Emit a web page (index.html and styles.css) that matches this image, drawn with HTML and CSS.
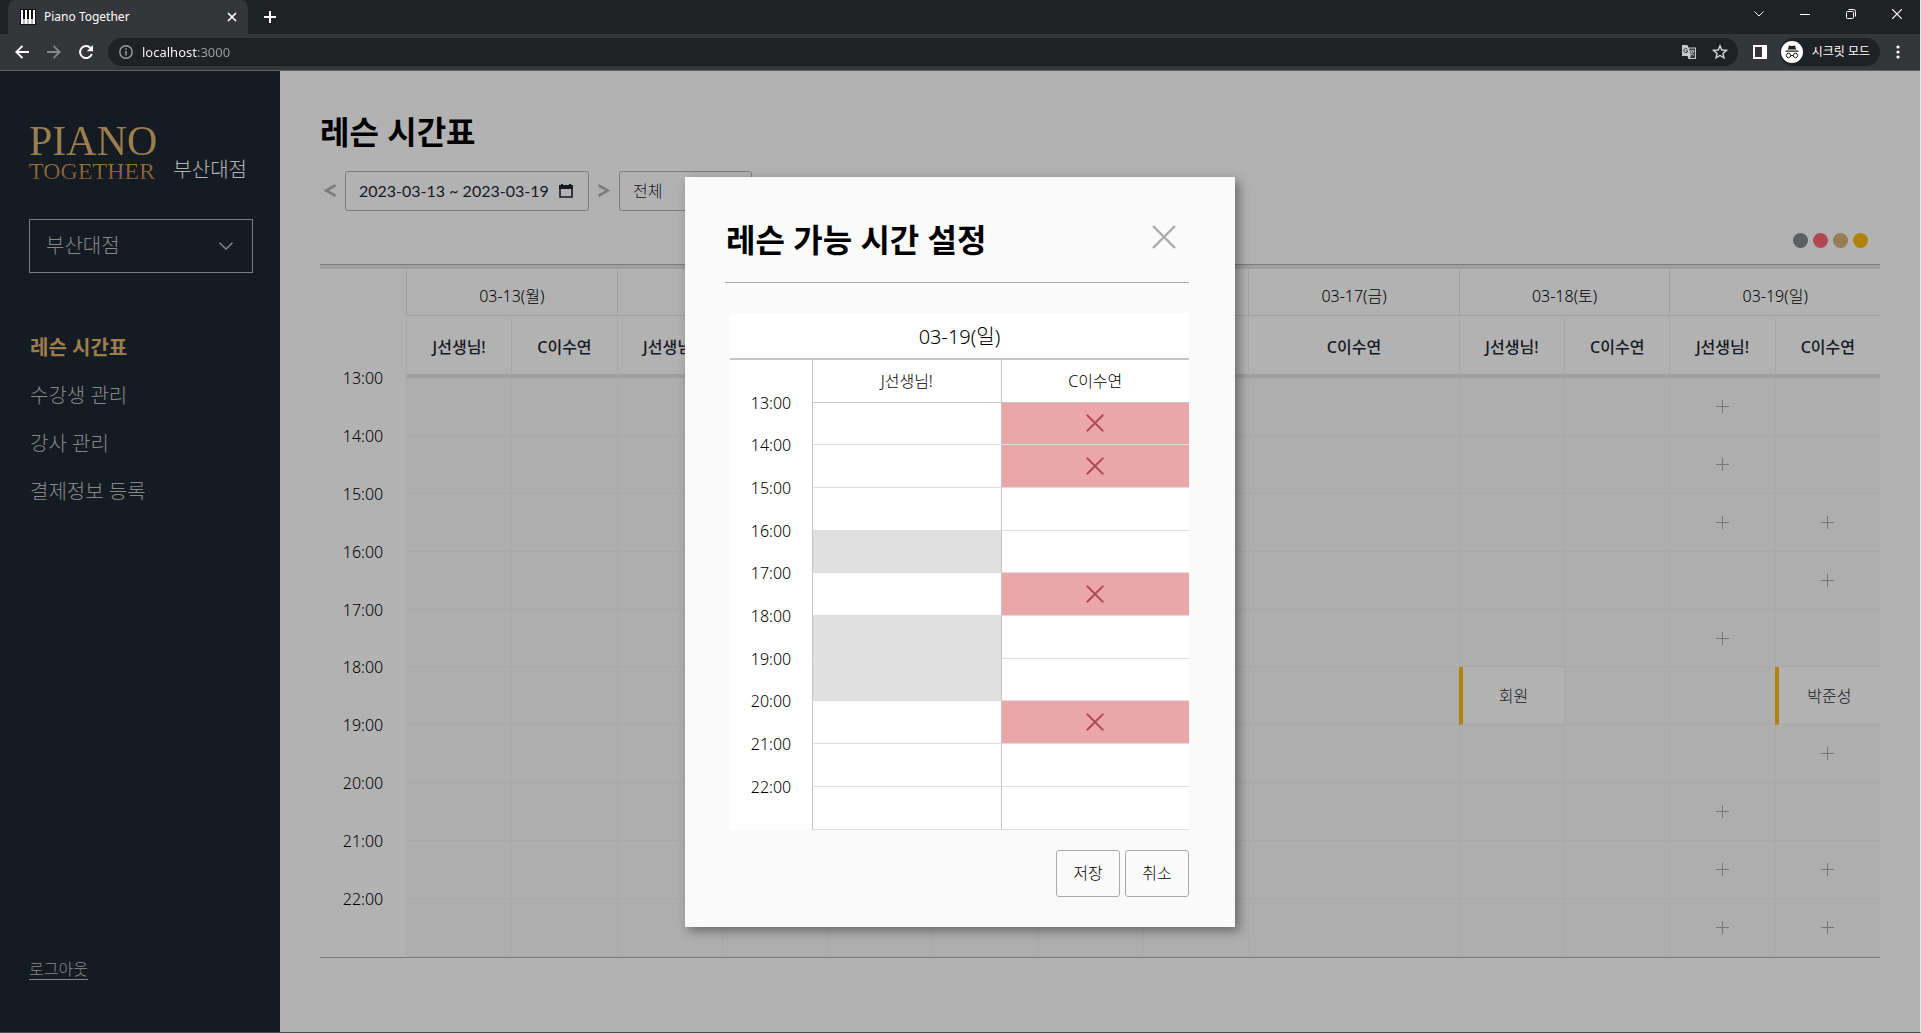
FILE: index.html
```html
<!DOCTYPE html>
<html lang="ko">
<head>
<meta charset="utf-8">
<meta name="viewport" content="width=device-width, initial-scale=1">
<title>Piano Together</title>
<link rel="stylesheet" href="styles.css">
</head>
<body>
<svg class="sprite" aria-hidden="true">
  <symbol id="plus" viewBox="0 0 13 13"><path d="M6.500 0V13M0 6.500H13" stroke="currentColor" fill="none"/></symbol>
  <symbol id="cross" viewBox="0 0 24 24"><path d="M1 1 23 23M23 1 1 23" stroke="currentColor" stroke-width="2.400" fill="none"/></symbol>
  <symbol id="chevron" viewBox="0 0 14 8"><path d="M.5.7 7 7 13.500.7" stroke="currentColor" stroke-width="1.500" fill="none"/></symbol>
</svg>

<header class="browser">
  <div class="tabstrip">
    <div class="tab">
      <svg class="favicon" viewBox="0 0 16 16"><path fill="#111" d="M0 0h16v16H0z"/><path fill="#fff" d="M1 1h14v14H1z"/><path fill="#111" d="M3 1h2v9H3zM7 1h2v9H7zM11 1h2v9h-2z"/><path stroke="#777" d="M4 10v5M8 10v5M12 10v5"/></svg>
      <span class="tab-title">Piano Together</span>
      <button class="icon-button" aria-label="탭 닫기"><svg width="10" height="10" viewBox="0 0 10 10"><path d="M1 1l8 8M9 1 1 9" stroke="#fff" stroke-width="1.700"/></svg></button>
    </div>
    <button class="icon-button new-tab" aria-label="새 탭"><svg width="12" height="12" viewBox="0 0 12 12"><path d="M6 0v12M0 6h12" stroke="#fff" stroke-width="2"/></svg></button>
    <div class="window-buttons">
      <button class="icon-button" aria-label="탭 검색"><svg width="10" height="6" viewBox="0 0 10 6"><path d="M.5.5 5 5 9.500.5" stroke="#fff" fill="none"/></svg></button>
      <button class="icon-button" aria-label="최소화"><svg width="10" height="2" viewBox="0 0 10 2"><path d="M0 1.500h10" stroke="#fff"/></svg></button>
      <button class="icon-button" aria-label="창 복원"><svg width="10" height="10" viewBox="0 0 10 10"><rect x=".5" y="2.500" width="7" height="7" rx="1" stroke="#fff" fill="none"/><path d="M2.500.5h5a2 2 0 0 1 2 2v5" stroke="#fff" fill="none"/></svg></button>
      <button class="icon-button" aria-label="닫기"><svg width="10" height="10" viewBox="0 0 10 10"><path d="M0 0l10 10M10 0 0 10" stroke="#fff" stroke-width="1.200"/></svg></button>
    </div>
  </div>
  <div class="toolbar">
    <div class="history">
      <button class="icon-button" aria-label="뒤로"><svg width="14" height="14" viewBox="0 0 14 14"><path d="M14 7H1.500M7.500.8 1.300 7l6.200 6.200" stroke="#fff" stroke-width="1.800" fill="none"/></svg></button>
      <button class="icon-button" aria-label="앞으로"><svg width="14" height="14" viewBox="0 0 14 14"><path d="M0 7h12.500M6.500.8 12.700 7l-6.200 6.200" stroke="#86888a" stroke-width="1.800" fill="none"/></svg></button>
      <button class="icon-button" aria-label="새로고침"><svg width="14" height="14" viewBox="0 0 14 14"><path d="M12.800 9A6 6 0 1 1 11.500 3" stroke="#fff" stroke-width="2" fill="none"/><path d="M14 0v6.200H7.800z" fill="#fff"/></svg></button>
    </div>
    <div class="omnibox">
      <svg width="14" height="14" viewBox="0 0 14 14"><circle cx="7" cy="7" r="6.200" stroke="#9aa0a6" stroke-width="1.400" fill="none"/><path d="M7 6v4.500M7 3.300v1.500" stroke="#9aa0a6" stroke-width="1.500"/></svg>
      <input class="address" type="text" aria-label="주소창" value="localhost:3000">
      <button class="icon-button" aria-label="번역"><svg width="14" height="14" viewBox="0 0 14 14"><path d="M0 0h5.500l1 2.500H14V14H6.500l-1-3H0z" fill="#c6c8ca"/><path d="M7.300 3.500H13V13H7.800L9 11z" fill="#35363a"/><path d="M8 6h4.500M10.200 4.800V6M11.700 6c-.3 2-2 3.500-3 4M9.200 7c.6 1.800 2 3 3 3.500" stroke="#c6c8ca" fill="none"/><path d="M5.300 4.300a2 2 0 1 0 .4 1.600H3.800" stroke="#35363a" fill="none"/></svg></button>
      <button class="icon-button" aria-label="북마크"><svg width="16" height="16" viewBox="0 0 16 16"><path d="M8 1.800l1.800 4.200 4.600.4-3.500 3 1.100 4.500L8 11.500l-4 2.400 1.100-4.500-3.500-3 4.600-.4z" stroke="#d5d6d8" stroke-width="1.400" fill="none"/></svg></button>
    </div>
    <button class="icon-button" aria-label="측면 패널"><svg width="14" height="14" viewBox="0 0 14 14"><path d="M1 1h12v12H1z" stroke="#fff" stroke-width="2" fill="none"/><path d="M9 1h4v12H9z" fill="#fff"/></svg></button>
    <button class="incognito">
      <svg width="22" height="22" viewBox="0 0 22 22"><circle cx="11" cy="11" r="11" fill="#fff"/><path d="M8 4.500l3 .6 3-.6 1.200 4H6.800zM4.500 9.500h13v1.200h-13z" fill="#202124"/><g stroke="#202124" fill="none"><circle cx="7.500" cy="14.500" r="2.200"/><circle cx="14.500" cy="14.500" r="2.200"/><path d="M9.700 14.500h2.600"/></g></svg>
      시크릿 모드
    </button>
    <button class="icon-button menu-button" aria-label="메뉴"><svg width="4" height="14" viewBox="0 0 4 14"><g fill="#fff"><circle cx="2" cy="2" r="1.600"/><circle cx="2" cy="7" r="1.600"/><circle cx="2" cy="12" r="1.600"/></g></svg></button>
  </div>
</header>

<div class="app">
  <aside class="sidebar">
    <div class="brand">
      <div class="logo"><span class="logo-top">PIANO</span><span class="logo-bottom">TOGETHER</span></div>
      <span class="branch">부산대점</span>
    </div>
    <label class="picker branch-picker">
      <select aria-label="지점 선택"><option>부산대점</option></select>
      <svg width="14" height="8"><use href="#chevron"/></svg>
    </label>
    <nav class="menu">
      <a class="active" href="#lessons">레슨 시간표</a>
      <a href="#students">수강생 관리</a>
      <a href="#teachers">강사 관리</a>
      <a href="#payments">결제정보 등록</a>
    </nav>
    <a class="logout" href="#logout">로그아웃</a>
  </aside>

  <main class="content">
    <h1>레슨 시간표</h1>
    <div class="filters">
      <button class="week-step" aria-label="이전 주"><svg width="12" height="13" viewBox="0 0 12 13"><path d="M11.500 1.200 2 6.500l9.500 5.300" stroke="currentColor" stroke-width="2.600" fill="none"/></svg></button>
      <label class="week-field">
        <input type="text" aria-label="기간" value="2023-03-13 ~ 2023-03-19" readonly>
        <svg width="14" height="14" viewBox="0 0 14 14"><path d="M1 2h12v11H1z" stroke="currentColor" stroke-width="1.600" fill="none"/><path d="M0 1h14v4H0zM2 0h2v2H2zM10 0h2v2h-2z" fill="currentColor"/></svg>
      </label>
      <button class="week-step" aria-label="다음 주"><svg width="12" height="13" viewBox="0 0 12 13"><path d="M.5 1.200 10 6.500.5 11.800" stroke="currentColor" stroke-width="2.600" fill="none"/></svg></button>
      <label class="picker teacher-picker">
        <select aria-label="강사 선택"><option>전체</option></select>
        <svg width="14" height="8"><use href="#chevron"/></svg>
      </label>
    </div>
    <div class="legend"><i class="dot gray"></i><i class="dot red"></i><i class="dot gold"></i><i class="dot amber"></i></div>

    <table class="week">
      <colgroup><col class="time-col"><col span="14"></colgroup>
      <thead>
        <tr class="days"><td rowspan="2" class="corner"></td><th colspan="2">03-13(월)</th><th colspan="2">03-14(화)</th><th colspan="2">03-15(수)</th><th colspan="2">03-16(목)</th><th colspan="2">03-17(금)</th><th colspan="2">03-18(토)</th><th colspan="2">03-19(일)</th></tr>
        <tr class="teachers"><th>J선생님!</th><th>C이수연</th><th>J선생님!</th><th>C이수연</th><th>J선생님!</th><th>C이수연</th><th>J선생님!</th><th>C이수연</th><th colspan="2">C이수연</th><th>J선생님!</th><th>C이수연</th><th>J선생님!</th><th>C이수연</th></tr>
      </thead>
      <tbody>
        <tr><th><span>13:00</span></th><td></td><td></td><td></td><td></td><td></td><td></td><td></td><td></td><td colspan="2"></td><td></td><td></td><td><button class="add" aria-label="추가"><svg><use href="#plus"/></svg></button></td><td></td></tr>
        <tr><th><span>14:00</span></th><td></td><td></td><td></td><td></td><td></td><td></td><td></td><td></td><td colspan="2"></td><td></td><td></td><td><button class="add" aria-label="추가"><svg><use href="#plus"/></svg></button></td><td></td></tr>
        <tr><th><span>15:00</span></th><td></td><td></td><td></td><td></td><td></td><td></td><td></td><td></td><td colspan="2"></td><td></td><td></td><td><button class="add" aria-label="추가"><svg><use href="#plus"/></svg></button></td><td><button class="add" aria-label="추가"><svg><use href="#plus"/></svg></button></td></tr>
        <tr><th><span>16:00</span></th><td></td><td></td><td></td><td></td><td></td><td></td><td></td><td></td><td colspan="2"></td><td></td><td></td><td></td><td><button class="add" aria-label="추가"><svg><use href="#plus"/></svg></button></td></tr>
        <tr><th><span>17:00</span></th><td></td><td></td><td></td><td></td><td></td><td></td><td></td><td></td><td colspan="2"></td><td></td><td></td><td><button class="add" aria-label="추가"><svg><use href="#plus"/></svg></button></td><td></td></tr>
        <tr><th><span>18:00</span></th><td></td><td></td><td></td><td></td><td></td><td></td><td></td><td></td><td colspan="2"></td><td class="lesson">회원</td><td></td><td></td><td class="lesson">박준성</td></tr>
        <tr><th><span>19:00</span></th><td></td><td></td><td></td><td></td><td></td><td></td><td></td><td></td><td colspan="2"></td><td></td><td></td><td></td><td><button class="add" aria-label="추가"><svg><use href="#plus"/></svg></button></td></tr>
        <tr><th><span>20:00</span></th><td></td><td></td><td></td><td></td><td></td><td></td><td></td><td></td><td colspan="2"></td><td></td><td></td><td><button class="add" aria-label="추가"><svg><use href="#plus"/></svg></button></td><td></td></tr>
        <tr><th><span>21:00</span></th><td></td><td></td><td></td><td></td><td></td><td></td><td></td><td></td><td colspan="2"></td><td></td><td></td><td><button class="add" aria-label="추가"><svg><use href="#plus"/></svg></button></td><td><button class="add" aria-label="추가"><svg><use href="#plus"/></svg></button></td></tr>
        <tr><th><span>22:00</span></th><td></td><td></td><td></td><td></td><td></td><td></td><td></td><td></td><td colspan="2"></td><td></td><td></td><td><button class="add" aria-label="추가"><svg><use href="#plus"/></svg></button></td><td><button class="add" aria-label="추가"><svg><use href="#plus"/></svg></button></td></tr>
      </tbody>
    </table>
  </main>

  <div class="backdrop">
    <section class="modal" role="dialog" aria-modal="true" aria-labelledby="modal-title">
      <div class="modal-head">
        <h2 id="modal-title">레슨 가능 시간 설정</h2>
        <button class="modal-close" aria-label="닫기"><svg><use href="#cross"/></svg></button>
      </div>
      <table class="slots">
        <caption>03-19(일)</caption>
        <colgroup><col class="slot-time-col"><col><col></colgroup>
        <thead><tr><td></td><th>J선생님!</th><th>C이수연</th></tr></thead>
        <tbody>
          <tr><th><span>13:00</span></th><td></td><td class="blocked"><svg><use href="#cross"/></svg></td></tr>
          <tr><th><span>14:00</span></th><td></td><td class="blocked"><svg><use href="#cross"/></svg></td></tr>
          <tr><th><span>15:00</span></th><td></td><td></td></tr>
          <tr><th><span>16:00</span></th><td class="off"></td><td></td></tr>
          <tr><th><span>17:00</span></th><td></td><td class="blocked"><svg><use href="#cross"/></svg></td></tr>
          <tr><th><span>18:00</span></th><td class="off"></td><td></td></tr>
          <tr><th><span>19:00</span></th><td class="off"></td><td></td></tr>
          <tr><th><span>20:00</span></th><td></td><td class="blocked"><svg><use href="#cross"/></svg></td></tr>
          <tr><th><span>21:00</span></th><td></td><td></td></tr>
          <tr><th><span>22:00</span></th><td></td><td></td></tr>
        </tbody>
      </table>
      <div class="modal-actions"><button>저장</button><button>취소</button></div>
    </section>
  </div>
</div>
</body>
</html>
```
FILE: styles.css
```css
* { box-sizing: border-box; }

body {
  margin: 0;
  min-height: 100vh;
  display: flex;
  flex-direction: column;
  border-right: 1px solid #e6e6e6;
  border-bottom: 1px solid #4a4a4a;
  font: 300 16px/20px "Noto Sans", "Noto Sans CJK KR", sans-serif;
  color: #000;
}

button, input, select { font: inherit; color: inherit; margin: 0; padding: 0; }
button { cursor: pointer; }
svg { display: block; flex: none; }
.sprite { display: none; }

.icon-button {
  display: flex;
  align-items: center;
  justify-content: center;
  border: 0;
  background: none;
}

/* Browser frame */
.browser { border-bottom: 1px solid #5f6368; background: #35363a; color: #fff; font-weight: 400; }

.tabstrip { display: flex; height: 34px; padding-left: 8px; background: #202124; }
.tab {
  display: flex;
  align-items: center;
  width: 240px;
  padding: 0 11px 0 12px;
  border-radius: 8px 8px 0 0;
  background: #35363a;
  font-size: 12px;
}
.favicon { width: 16px; height: 16px; }
.tab-title { flex: 1; margin-left: 8px; }
.new-tab { width: 44px; }
.window-buttons { display: flex; margin-left: auto; }
.window-buttons .icon-button { width: 46px; height: 28px; }

.toolbar { display: flex; align-items: center; height: 36px; padding-right: 12px; }
.history { display: flex; gap: 18px; padding: 0 15px; }
.omnibox {
  flex: 1;
  display: flex;
  align-items: center;
  height: 28px;
  margin-right: 15px;
  padding: 0 10px 0 11px;
  border-radius: 14px;
  background: #202124;
}
.omnibox .icon-button { margin-left: 16px; }
.address {
  flex: 1;
  min-width: 0;
  margin-left: 9px;
  border: 0;
  outline: 0;
  font-size: 13px;
  color: transparent;
  background: linear-gradient(90deg, #fff 55px, #9aa0a6 55px);
  -webkit-background-clip: text;
  background-clip: text;
}
.incognito {
  display: flex;
  align-items: center;
  gap: 9px;
  height: 28px;
  margin-left: 13px;
  padding: 0 10px 0 1px;
  border: 0;
  border-radius: 14px;
  background: #202124;
  font-size: 12px;
}
.menu-button { width: 20px; margin-left: 8px; }

/* App shell */
.app { position: relative; flex: 1; display: flex; background: #fff; }

.sidebar {
  display: flex;
  flex-direction: column;
  align-items: flex-start;
  width: 280px;
  flex: none;
  padding: 52px 27px 52px 29px;
  background: #1f2731;
  color: #c0c2c4;
  font-size: 20px;
}
.brand { display: flex; align-items: flex-end; gap: 16px; }
.logo {
  display: flex;
  flex-direction: column;
  font-family: "Liberation Serif", serif;
  font-weight: 400;
  color: transparent;
  background: linear-gradient(#dfb56e 50%, #b0713a);
  -webkit-background-clip: text;
  background-clip: text;
}
.logo-top { font-size: 42px; line-height: 36px; }
.logo-bottom { font-size: 24px; line-height: 24px; }
.branch { color: #fff; line-height: 26px; }

.picker { display: grid; align-items: center; }
.picker select, .picker svg { grid-area: 1 / 1; }
.picker select { width: 100%; height: 100%; border: 1px solid #b0b2b4; background: none; appearance: none; }
.picker svg { justify-self: end; pointer-events: none; }

.branch-picker { width: 100%; height: 54px; margin-top: 36px; }
.branch-picker select { padding: 0 16px; }
.branch-picker svg { margin-right: 20px; }

.menu { display: flex; flex-direction: column; gap: 28px; margin: 65px 0 auto 1px; }
.menu a { color: inherit; text-decoration: none; }
.menu .active { color: #dfb56e; font-weight: 700; }
.logout { border-bottom: 1px solid; color: inherit; font-size: 16px; text-decoration: none; }

/* Timetable */
.content { flex: 1; min-width: 0; padding: 41px 40px 60px; }
h1, h2 { margin: 0; font-size: 32px; line-height: 40px; font-weight: 700; }

.filters { display: flex; align-items: stretch; height: 40px; margin-top: 19px; }
.week-step { width: 12px; margin: 0 4px; padding-bottom: 2px; border: 0; background: none; color: #b0b0b0; }
.week-field {
  display: flex;
  align-items: center;
  margin: 0 5px;
  padding: 0 15px 0 13px;
  border: 1px solid #b0b0b0;
  border-radius: 3px;
  color: #1f2731;
}
.week-field input { width: 200px; border: 0; outline: 0; background: none; font-family: Lato, sans-serif; font-weight: 400; }
.teacher-picker { width: 133px; margin-left: 5px; color: #1f2731; }
.teacher-picker select { padding: 0 13px; border-radius: 3px; }
.teacher-picker svg { margin-right: 13px; }

.legend { display: flex; justify-content: flex-end; gap: 5px; padding: 22px 12px 16px; }
.dot { width: 15px; height: 15px; border-radius: 50%; }
.gray { background: #82898d; }
.red { background: #fb6878; }
.gold { background: #d9b377; }
.amber { background: #ffbb0c; }

table { border-spacing: 0; table-layout: fixed; }
th, td { padding: 0; text-align: center; font-weight: 300; }

.week { width: 100%; border: solid #b0b0b0; border-width: 1px 0; }
.time-col { width: 86px; }
.corner { border-top: 4px solid #e4e4e4; }
.days th { height: 51px; padding-top: 8px; border: solid #e4e4e4; border-width: 4px 0 1px 1px; }
.teachers th {
  height: 62px;
  border-top: 4px solid #fff;
  border-bottom: 4px solid #e4e4e4;
  border-left: 1px solid #f1f1f1;
  color: #1f2731;
  font-weight: 500;
}
.week tbody tr { height: 58px; }
.week tbody tr:nth-child(5) { height: 57px; }
.week tbody td { border: solid #f2f2f2; border-width: 0 0 1px 1px; background: #fafafa; }
tbody th { vertical-align: top; }
tbody th span { display: block; margin-top: -10px; }
.add { display: block; margin: 0 auto; border: 0; background: none; color: #a6a6a6; }
.add svg { width: 13px; height: 13px; }
.week tbody .lesson { border-left: 4px solid #ffbb0c; background: #fff; color: #1f2731; }

/* Availability dialog */
.backdrop {
  position: absolute;
  inset: 0;
  display: flex;
  align-items: center;
  justify-content: center;
  background: rgba(0, 0, 0, .3);
}
.modal {
  width: 550px;
  padding: 40px 46px 30px 40px;
  background: #fafafa;
  box-shadow: 4px 4px 10px rgba(0, 0, 0, .4);
}
.modal-head {
  display: flex;
  align-items: flex-start;
  justify-content: space-between;
  height: 66px;
  padding: 3px 13px 0 1px;
  border-bottom: 1px solid #aaa;
}
.modal-close { padding-top: 5px; border: 0; background: none; color: #aaa; }
.modal-close svg { width: 24px; height: 24px; }

.slots { width: 459px; margin: 30px 0 0 5px; background: #fff; }
.slots caption { height: 47px; padding-top: 14px; border-bottom: 2px solid #c4c4c4; background: #fff; font-size: 20px; }
.slot-time-col { width: 82px; }
.slots thead tr { height: 43px; }
.slots tbody tr { height: 43px; }
.slots tbody tr:nth-child(3n+1):not(:last-child) { height: 42px; }
.slots thead th { border: solid #c4c4c4; border-width: 0 0 1px 1px; }
.slots tbody td { border-left: 1px solid #c4c4c4; border-bottom: 1px solid #dedede; }
.slots .off { background: #e0e0e0; }
.slots .blocked { background: #eba6a8; color: #b0485a; }
.blocked svg { width: 18px; height: 18px; margin: 0 auto; }

.modal-actions { display: flex; justify-content: flex-end; gap: 5px; margin-top: 20px; }
.modal-actions button { width: 64px; height: 47px; border: 1px solid #aaa; border-radius: 3px; background: none; }
```
